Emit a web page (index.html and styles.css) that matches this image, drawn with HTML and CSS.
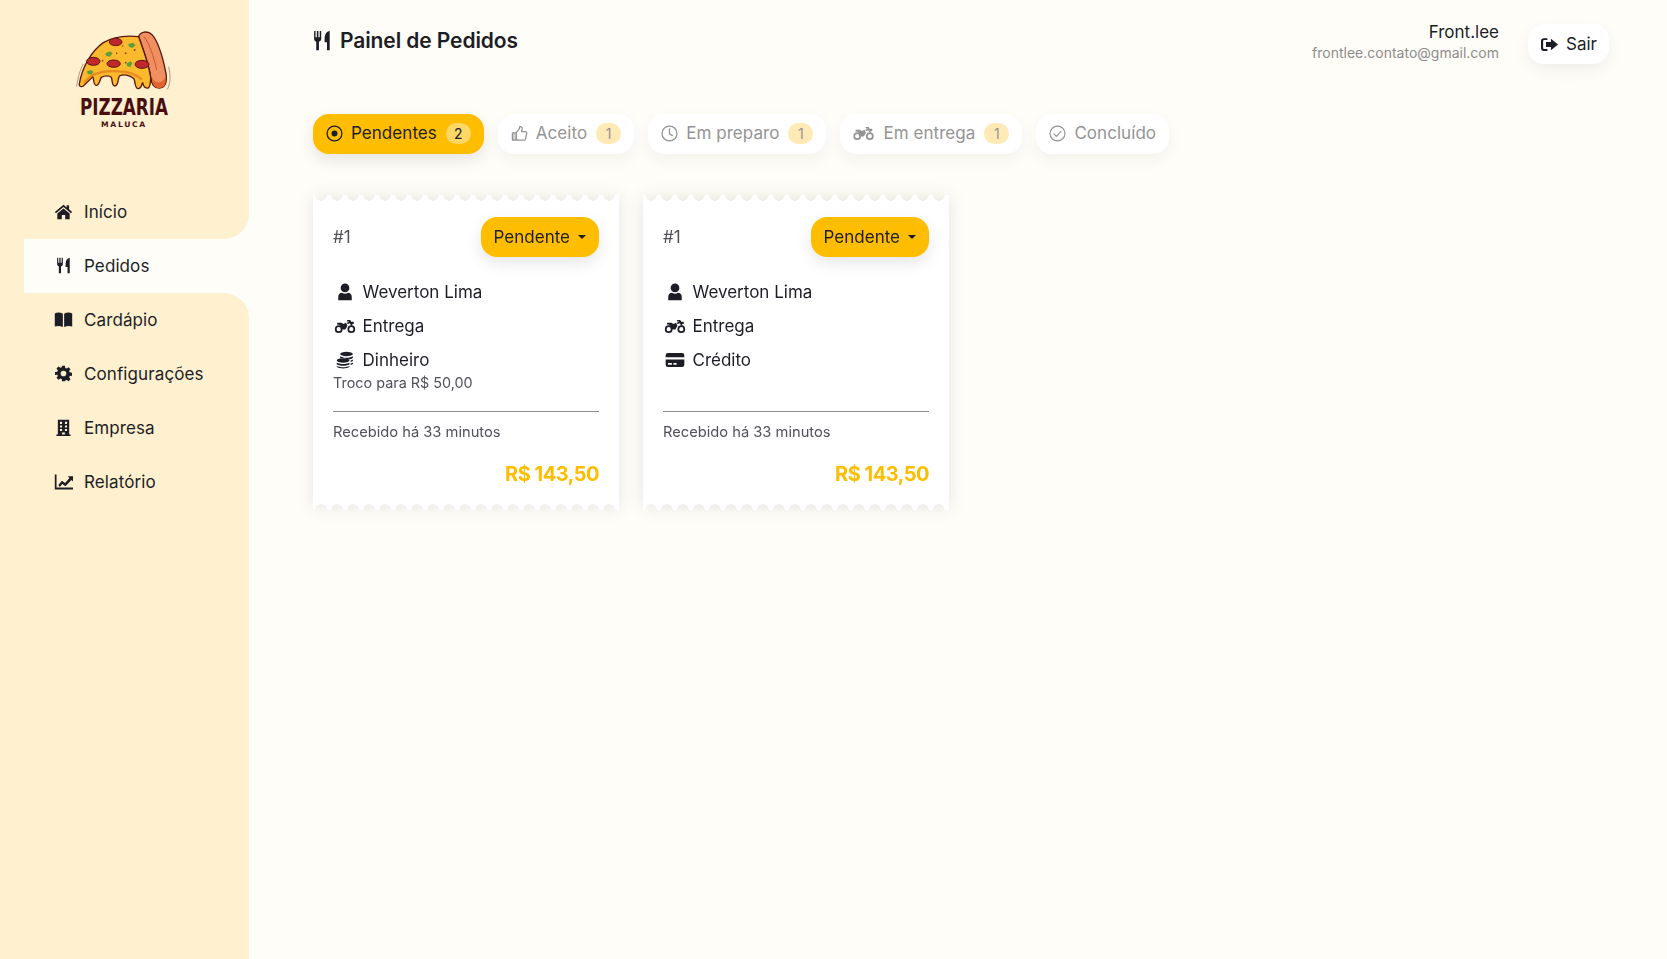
FILE: index.html
```html
<!DOCTYPE html>
<html lang="pt-BR">
<head>
    <meta charset="UTF-8">
    <title>Painel de Pedidos</title>
    <link rel="stylesheet" href="styles.css">
</head>
<body>
    <!-- icon set -->
    <svg class="icon-defs" xmlns="http://www.w3.org/2000/svg">
        <symbol id="i-home" viewBox="0 0 24 22"><path d="M12 2.200 .8 11.600l1.500 1.800L12 5.300l9.700 8.100 1.500-1.800-4-3.400V3h-3v2.900z"/><path d="M4 13.600 12 7l8 6.600V21h-5.800v-5.400H9.800V21H4z"/></symbol>
        <symbol id="i-cutlery" viewBox="0 0 20 24"><path d="M1 1h1.600v7.200h1.500V1h1.800v7.200h1.500V1H9.100v9c0 1.700-1 3-2.600 3.500V23H3.400v-9.500C2 13 1 11.700 1 10z"/><path d="M13 9.500C13 5 15 1.500 18.800 1V23h-3.100v-9H13z"/></symbol>
        <symbol id="i-book" viewBox="0 0 24 20"><path d="M1 2.500C4 .8 8 .9 11.200 2.800V19.500C8 17.800 4 17.700 1 18.700z"/><path d="M23 2.500C20 .8 16 .9 12.800 2.800V19.500C16 17.800 20 17.700 23 18.700z"/></symbol>
        <symbol id="i-gear" viewBox="0 0 24 24"><path fill-rule="evenodd" d="M10 1h4l.6 3.200 1.800.8 2.700-1.900 2.800 2.800-1.900 2.700.8 1.800 3.200.6v4l-3.200.6-.8 1.800 1.900 2.700-2.800 2.800-2.700-1.900-1.800.8L14 23h-4l-.6-3.200-1.800-.8-2.700 1.900-2.800-2.800 1.900-2.700-.8-1.800L0 14v-4l3.200-.6.8-1.800L2.100 4.900l2.800-2.800 2.700 1.900 1.800-.8zM12 8a4 4 0 1 0 0 8 4 4 0 0 0 0-8z"/></symbol>
        <symbol id="i-building" viewBox="0 0 20 24"><path fill-rule="evenodd" d="M2 1h16v21h2v2H0v-2h2zm3 3v3h3V4zm7 0v3h3V4zM5 9v3h3V9zm7 0v3h3V9zm-7 5v3h3v-3zm7 0v3h3v-3zm-4 5v3h4v-3z"/></symbol>
        <symbol id="i-chart" viewBox="0 0 24 20"><path d="M1 1h2.200v16.500H24V20H1z"/><path d="M5.500 14.500 10 9l4 3 5.500-6.500L17.500 3.500H24v6.500l-2-2-7.500 8-4-3-3.200 3.800z"/></symbol>
        <symbol id="i-user" viewBox="0 0 20 24"><circle cx="10" cy="6.500" r="5.800"/><path d="M1 23v-4.500C1 15 3.500 13 6 13c1.200.8 2.500 1.200 4 1.200s2.800-.4 4-1.200c2.500 0 5 2 5 5.500V23z"/></symbol>
        <symbol id="i-moto" viewBox="0 0 30 20"><path fill-rule="evenodd" d="M6 9a5.500 5.500 0 1 1 0 11A5.500 5.500 0 0 1 6 9zm0 2.500a3 3 0 1 0 0 6 3 3 0 0 0 0-6z"/><path fill-rule="evenodd" d="M24 9a5.500 5.500 0 1 1 0 11 5.500 5.500 0 0 1 0-11zm0 2.500a3 3 0 1 0 0 6 3 3 0 0 0 0-6z"/><path d="M4 5.500h6l2.500 1.500 4-1.500 2 4-3 5.500H11C10.500 11 8 8 3.500 8zM18 1.500h4.500l1.300 2.500h3.700v3h-2.500l1 2-2 1-3.500-6.500H18z"/><path d="M17.500 5.500 22 3.500l1 2-4 2z"/></symbol>
        <symbol id="i-coins" viewBox="0 0 24 24"><ellipse cx="14" cy="4" rx="8.500" ry="3"/><path d="M5.500 7c1.500 1.200 5 2 8.500 2s7-.8 8.500-2v2c-1 1.300-3.600 2-6.500 2.200-2.400-1.300-6-1.800-10.500-1.300z"/><ellipse cx="9.500" cy="12.500" rx="8.500" ry="3"/><path d="M1 15.200c1.500 1.300 5 2 8.500 2s7-.7 8.500-2v2.300c-1.500 1.300-5 2-8.500 2s-7-.7-8.500-2zM1 19.500c1.500 1.300 5 2 8.500 2s7-.7 8.500-2v1.500c-1.500 1.400-5 2.200-8.500 2.200S2.500 22.400 1 21zM19.500 12.500c1.500-.3 2.500-.8 3-1.300v2c-.6.6-1.700 1-3 1.300zM19.500 16.500c1.500-.3 2.500-.8 3-1.300v2c-.6.6-1.700 1-3 1.300z"/></symbol>
        <symbol id="i-card" viewBox="0 1 24 18"><path d="M3 1h18a3 3 0 0 1 3 3v2.500H0V4a3 3 0 0 1 3-3zM0 9.500h24V16a3 3 0 0 1-3 3H3a3 3 0 0 1-3-3zm3 4.500v2h5v-2zm7 0v2h4v-2z" fill-rule="evenodd"/></symbol>
        <symbol id="i-exit" viewBox="0 0 24 20"><path d="M9 1v2.500H4.500A1.500 1.500 0 0 0 3 5v10a1.500 1.500 0 0 0 1.500 1.500H9V19H4a4 4 0 0 1-4-4V5a4 4 0 0 1 4-4z"/><path d="M14 2l10 8-10 8v-4.500H7v-7h7z"/></symbol>
        <symbol id="i-record" viewBox="0 0 24 24"><circle cx="12" cy="12" r="10.500" fill="none" stroke="currentColor" stroke-width="1.800"/><circle cx="12" cy="12" r="4.200"/></symbol>
        <symbol id="i-thumb" viewBox="0 0 24 24"><path fill="none" stroke="currentColor" stroke-width="1.800" stroke-linejoin="round" d="M7.500 10.500 11 6.500c1-1.200 1.200-2.500 1.300-4.200 2.300-.4 3.700 1.300 3.500 3.500-.1 1.300-.5 2.300-1 3.500h5.200c1.600 0 2.500 1.300 2.200 2.700l-1.700 7.500c-.3 1.300-1.200 2-2.500 2H11c-1.500 0-2.500-.5-3.500-1.200zM2 11h5.500v10.500H2z"/><path d="M2 11h5.500v10.500H2z" opacity=".45"/></symbol>
        <symbol id="i-clock" viewBox="0 0 24 24"><circle cx="12" cy="12" r="10.500" fill="none" stroke="currentColor" stroke-width="1.800"/><path fill="none" stroke="currentColor" stroke-width="1.800" stroke-linecap="round" d="M12 5.500V12.500l4.200 2.500"/></symbol>
        <symbol id="i-check" viewBox="0 0 24 24"><circle cx="12" cy="12" r="10.500" fill="none" stroke="currentColor" stroke-width="1.600"/><path fill="none" stroke="currentColor" stroke-width="1.600" stroke-linecap="round" stroke-linejoin="round" d="M7 12.500l3.500 3.500L17 9"/></symbol>
    </svg>

    <div class="layout">
        <aside class="sidebar">
            <div class="logo">
                <svg class="logo-art" viewBox="0 0 390 345" xmlns="http://www.w3.org/2000/svg">
                    <!-- crust -->
                    <path d="M236 50C240 36 262 30 276 44C296 66 308 110 318 160C322 185 316 204 298 204C280 204 274 192 272 172C266 130 250 90 236 50Z" fill="#f08f60" stroke="#5a1712" stroke-width="4"/>
                    <path d="M276 170C282 190 306 196 316 170C320 190 314 204 298 204C282 204 276 192 276 170Z" fill="#e2622b"/>
                    <path d="M252 50C268 70 280 106 290 150" fill="none" stroke="#c9572e" stroke-width="3"/>
                    <!-- slice -->
                    <path d="M236 50C200 46 160 50 130 68C96 92 66 140 58 192C57 200 64 202 70 198L98 170C102 176 100 194 108 196C118 198 118 182 124 172C134 166 148 166 154 172C158 180 154 196 164 198C176 198 172 182 178 168C190 162 208 164 222 176C226 186 224 204 234 206C246 206 244 192 248 188C250 198 254 206 264 204C272 202 272 184 272 172C266 130 250 90 236 50Z" fill="#fbb92e" stroke="#5a1712" stroke-width="4" stroke-linejoin="round"/>
                    <path d="M72 188 96 166C120 154 150 152 178 154C204 154 226 162 246 178" fill="none" stroke="#e98a1f" stroke-width="7"/>
                    <!-- toppings -->
                    <ellipse cx="167" cy="66" rx="19" ry="11" fill="#c0282c" stroke="#5a1712" stroke-width="3"/>
                    <ellipse cx="100" cy="124" rx="20" ry="12" fill="#c0282c" stroke="#5a1712" stroke-width="3"/>
                    <ellipse cx="161" cy="131" rx="20" ry="11" fill="#c0282c" stroke="#5a1712" stroke-width="3"/>
                    <ellipse cx="246" cy="133" rx="21" ry="12" fill="#c0282c" stroke="#5a1712" stroke-width="3"/>
                    <path d="M136 100l14-6 8 6-8 10-12-2z" fill="#5d9f3c"/>
                    <path d="M205 72l14-4 8 8-10 8-10-4z" fill="#5d9f3c"/>
                    <path d="M200 130l12-6 5 6-6 12-10-4z" fill="#5d9f3c"/>
                    <path d="M81 154l12-4 8 6-8 8-10-2z" fill="#5d9f3c"/>
                    <circle cx="197" cy="100" r="3" fill="#8a4a14"/>
                    <circle cx="224" cy="90" r="3" fill="#8a4a14"/>
                    <circle cx="170" cy="100" r="2.500" fill="#8a4a14"/>
                    <circle cx="128" cy="122" r="2.500" fill="#8a4a14"/>
                    <circle cx="188" cy="78" r="2.500" fill="#8a4a14"/>
                    <circle cx="197" cy="128" r="2.500" fill="#8a4a14"/>
                    <!-- sketch lines -->
                    <path d="M50 200C54 170 60 150 70 132M326 140C332 165 332 190 322 208" fill="none" stroke="#8a6a55" stroke-width="2"/>
                    <text class="logo-name" transform="translate(192 284) scale(.72 1)" text-anchor="middle">PIZZARIA</text>
                    <text class="logo-sub" x="192" y="322" text-anchor="middle">MALUCA</text>
                </svg>
            </div>

            <nav class="nav">
                <a class="nav-item before-active"><svg class="nav-icon"><use href="#i-home"/></svg>Início</a>
                <a class="nav-item active"><svg class="nav-icon"><use href="#i-cutlery"/></svg>Pedidos</a>
                <a class="nav-item after-active"><svg class="nav-icon"><use href="#i-book"/></svg>Cardápio</a>
                <a class="nav-item"><svg class="nav-icon"><use href="#i-gear"/></svg>Configurações</a>
                <a class="nav-item"><svg class="nav-icon"><use href="#i-building"/></svg>Empresa</a>
                <a class="nav-item"><svg class="nav-icon"><use href="#i-chart"/></svg>Relatório</a>
            </nav>
            <div class="sidebar-rest"></div>
        </aside>

        <main class="main">
            <header class="topbar">
                <h1 class="title"><svg class="title-icon"><use href="#i-cutlery"/></svg>Painel de Pedidos</h1>
                <div class="account">
                    <div class="account-info">
                        <div class="account-name">Front.lee</div>
                        <div class="account-email">frontlee.contato@gmail.com</div>
                    </div>
                    <button class="logout"><svg class="logout-icon"><use href="#i-exit"/></svg>Sair</button>
                </div>
            </header>

            <div class="tabs">
                <div class="tab active"><svg class="tab-icon"><use href="#i-record"/></svg>Pendentes<span class="badge">2</span></div>
                <div class="tab"><svg class="tab-icon"><use href="#i-thumb"/></svg>Aceito<span class="badge">1</span></div>
                <div class="tab"><svg class="tab-icon"><use href="#i-clock"/></svg>Em preparo<span class="badge">1</span></div>
                <div class="tab"><svg class="tab-icon moto"><use href="#i-moto"/></svg>Em entrega<span class="badge">1</span></div>
                <div class="tab"><svg class="tab-icon"><use href="#i-check"/></svg>Concluído</div>
            </div>

            <div class="orders">
                <div class="ticket">
                    <article class="ticket-paper">
                        <div class="ticket-head">
                            <span class="ticket-id">#1</span>
                            <button class="status">Pendente<span class="caret"></span></button>
                        </div>
                        <div class="ticket-row"><svg class="row-icon"><use href="#i-user"/></svg>Weverton Lima</div>
                        <div class="ticket-row"><svg class="row-icon small"><use href="#i-moto"/></svg>Entrega</div>
                        <div class="ticket-row"><svg class="row-icon"><use href="#i-coins"/></svg>Dinheiro</div>
                        <div class="ticket-note">Troco para R$ 50,00</div>
                        <hr class="ticket-line">
                        <div class="ticket-time">Recebido há 33 minutos</div>
                        <div class="ticket-price">R$ 143,50</div>
                    </article>
                </div>

                <div class="ticket">
                    <article class="ticket-paper">
                        <div class="ticket-head">
                            <span class="ticket-id">#1</span>
                            <button class="status">Pendente<span class="caret"></span></button>
                        </div>
                        <div class="ticket-row"><svg class="row-icon"><use href="#i-user"/></svg>Weverton Lima</div>
                        <div class="ticket-row"><svg class="row-icon small"><use href="#i-moto"/></svg>Entrega</div>
                        <div class="ticket-row"><svg class="row-icon small"><use href="#i-card"/></svg>Crédito</div>
                        <div class="ticket-note"></div>
                        <hr class="ticket-line">
                        <div class="ticket-time">Recebido há 33 minutos</div>
                        <div class="ticket-price">R$ 143,50</div>
                    </article>
                </div>
            </div>
        </main>
    </div>
</body>
</html>
```

FILE: styles.css
```css
* {
    box-sizing: border-box;
}

body {
    margin: 0;
    background: #fffdf8;
    color: #1d1d26;
    font-family: Inter, "Noto Sans", sans-serif;
}

button {
    font-family: inherit;
    border: 0;
    cursor: pointer;
}

.icon-defs {
    display: none;
}

.layout {
    display: flex;
    height: 959px;
    overflow: hidden;
}

/* Sidebar */
.sidebar {
    width: 249px;
    flex-shrink: 0;
    display: flex;
    flex-direction: column;
    background: linear-gradient(to right, #fff0cf 24px, transparent 24px);
}

.logo {
    height: 185px;
    padding: 20px 0 0 60px;
    background: #fff0cf;
}

.logo-art {
    display: block;
    width: 130px;
    height: 115px;
}

.logo-name {
    font-family: "DejaVu Sans", sans-serif;
    font-weight: 700;
    font-size: 70px;
    fill: #4a0e10;
}

.logo-sub {
    font-family: "DejaVu Sans", sans-serif;
    font-weight: 700;
    font-size: 23px;
    letter-spacing: 5px;
    fill: #4a0e10;
}

.nav {
    display: flex;
    flex-direction: column;
}

.nav-item {
    height: 54px;
    display: flex;
    align-items: center;
    padding-left: 54px;
    padding-bottom: 1px;
    background: #fff0cf;
    font-size: 17px;
    letter-spacing: .1px;
}

.nav-item.active {
    margin-left: 24px;
    padding-left: 30px;
    background: #fffdf8;
    border-radius: 20px 0 0 20px;
}

.nav-item.before-active {
    border-bottom-right-radius: 25px;
}

.nav-item.after-active {
    border-top-right-radius: 25px;
}

.nav-icon {
    width: 19px;
    height: 17px;
    margin-right: 11px;
    fill: #1d1d26;
}

.sidebar-rest {
    flex: 1;
    background: #fff0cf;
}

/* Main */
.main {
    flex: 1;
    padding: 24px 58px 0 64px;
}

.topbar {
    display: flex;
    justify-content: space-between;
    align-items: flex-start;
    height: 90px;
}

.title {
    display: flex;
    align-items: center;
    margin: 4px 0 0;
    font-size: 21px;
    font-weight: 600;
    letter-spacing: -.1px;
}

.title-icon {
    width: 18px;
    height: 21px;
    margin-right: 9px;
    fill: #1d1d26;
}

.account {
    display: flex;
    align-items: flex-start;
    gap: 29px;
}

.account-info {
    text-align: right;
}

.account-name {
    font-size: 17px;
    line-height: 20px;
    margin-top: -2px;
}

.account-email {
    margin-top: 1px;
    font-size: 14px;
    line-height: 20px;
    color: #8c8c8c;
}

.logout {
    display: flex;
    align-items: center;
    height: 40px;
    padding: 0 12px 0 13px;
    background: #fff;
    border-radius: 16px;
    box-shadow: 0 6px 16px rgba(0, 0, 0, .06);
    font-size: 17px;
    color: #1d1d26;
}

.logout-icon {
    width: 17px;
    height: 15px;
    margin-right: 8px;
    fill: #1d1d26;
}

/* Status tabs */
.tabs {
    display: flex;
    gap: 14px;
}

.tab {
    display: flex;
    align-items: center;
    height: 40px;
    padding: 0 13px 2px;
    border-radius: 16px;
    background: #fff;
    box-shadow: 0 6px 16px rgba(0, 0, 0, .05);
    font-size: 17px;
    letter-spacing: .05px;
    color: #949494;
}

.tab.active {
    background: #ffbd00;
    color: #1d1d26;
    box-shadow: 0 6px 16px rgba(0, 0, 0, .1);
}

.tab-icon {
    width: 17px;
    height: 17px;
    margin-right: 8px;
    fill: currentColor;
}

.tab-icon.moto {
    width: 21px;
    height: 14px;
    margin-right: 9px;
}

.badge {
    width: 25px;
    height: 21px;
    margin-left: 9px;
    border-radius: 11px;
    background: #ffeab5;
    font-size: 14px;
    line-height: 21px;
    text-align: center;
}

.tab.active .badge {
    background: rgba(255, 255, 255, .4);
}

/* Order tickets */
.orders {
    display: flex;
    gap: 24px;
    margin-top: 41px;
}

.ticket {
    width: 306px;
    height: 315px;
    filter: drop-shadow(0 0 8px rgba(0, 0, 0, .1));
}

/* scalloped paper edges */
.ticket-paper {
    height: 100%;
    padding: 22px 20px 0;
    background: #fff;
    mask:
        radial-gradient(circle at 8px 0, transparent 5.500px, #000 6px) top left / 16px 6px repeat-x,
        radial-gradient(circle at 8px 6px, transparent 5.500px, #000 6px) bottom left / 16px 6px repeat-x,
        linear-gradient(#000, #000) center / 100% calc(100% - 12px) no-repeat;
}

.ticket-head {
    display: flex;
    justify-content: space-between;
    align-items: center;
    height: 40px;
    margin-bottom: 18px;
}

.ticket-id {
    font-size: 17px;
    color: #51515a;
}

.status {
    display: flex;
    align-items: center;
    height: 40px;
    padding: 0 13px;
    background: #ffbd00;
    border-radius: 16px;
    box-shadow: 0 6px 16px rgba(0, 0, 0, .1);
    font-size: 17px;
    color: #1d1d26;
}

.caret {
    margin-left: 8px;
    border-top: 4px solid #1d1d26;
    border-left: 4px solid transparent;
    border-right: 4px solid transparent;
}

.ticket-row {
    display: flex;
    align-items: center;
    height: 34px;
    font-size: 17px;
}

.row-icon {
    width: 24px;
    height: 18px;
    margin-right: 5.500px;
    fill: #1d1d26;
    flex-shrink: 0;
}

.row-icon.small {
    height: 14px;
}

.ticket-note {
    height: 20px;
    margin-top: -4px;
    font-size: 14.400px;
    line-height: 20px;
    color: #51515a;
}

.ticket-line {
    margin: 18px 0 0;
    border: 0;
    border-top: 1px solid #8f8c8c;
}

.ticket-time {
    margin-top: 10px;
    font-size: 14.700px;
    line-height: 20px;
    color: #51515a;
}

.ticket-price {
    margin-top: 18px;
    text-align: right;
    font-size: 20px;
    line-height: 28px;
    font-weight: 700;
    letter-spacing: -.5px;
    color: #ffbd00;
}
```
